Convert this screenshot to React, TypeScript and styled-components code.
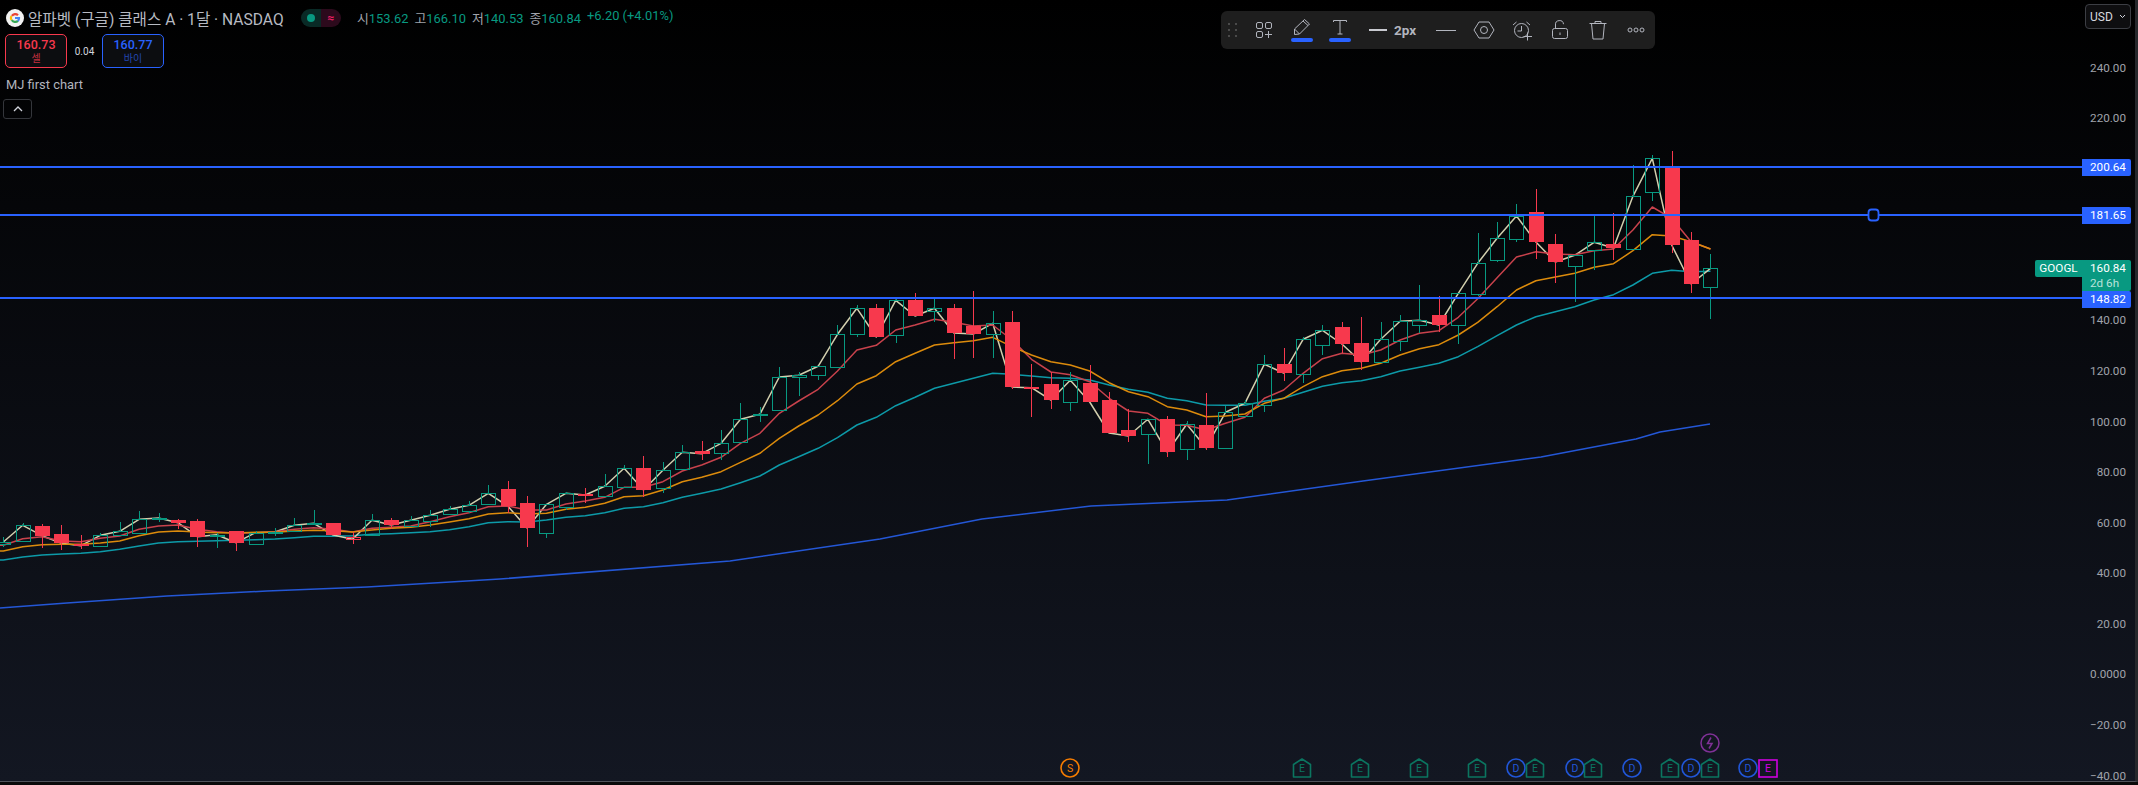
import React from 'react'
import styled, { createGlobalStyle } from 'styled-components'

const UI_FONT = `Roboto, 'Noto Sans CJK KR', sans-serif`
const UP = '#089981'
const DOWN = '#f7394d'
const BLUE = '#2962ff'

const GlobalStyle = createGlobalStyle`
  html, body {
    margin: 0;
    padding: 0;
    background: #0a0a0a;
    font-family: ${UI_FONT};
  }
`

const Page = styled.div`
  width: 2138px;
  height: 785px;
  overflow: hidden;
  background: #0a0a0a;
`

const Frame = styled.div`
  display: flex;
  height: 781px;
  background: linear-gradient(#000 0%, #131722 100%);
  border-right: 3px solid #26282c;
  border-bottom: 1px solid #50535b;
`

const Pane = styled.div`
  position: relative;
  flex: 1;
  overflow: hidden;
`

const PriceAxis = styled.div`
  position: relative;
  display: flex;
  flex-direction: column;
  width: 53px;
  height: 781px;
`

const CurrencyButton = styled.div`
  display: flex;
  align-items: center;
  justify-content: space-between;
  box-sizing: border-box;
  flex: none;
  width: 46px;
  height: 25px;
  margin: 4px 0 13.4px 3px;
  padding: 0 4px;
  background: #0e0e10;
  border: 1px solid #3c3e44;
  border-radius: 4px;
  color: #d6d8de;
  font-size: 12px;
`

const AxisLabel = styled.div`
  display: flex;
  align-items: center;
  justify-content: flex-end;
  flex: none;
  height: 50.57px;
  padding-right: 9px;
  color: #a0a3ab;
  font-size: 11.7px;
  line-height: 12px;
`

const PriceTag = styled.div<{ $top: number; $bg: string; $height: number }>`
  position: absolute;
  left: 0;
  top: ${(p) => p.$top}px;
  box-sizing: border-box;
  width: 49px;
  height: ${(p) => p.$height}px;
  padding-left: 8px;
  background: ${(p) => p.$bg};
  border-radius: 0 2px 2px 0;
  color: #fff;
  font-size: 11.7px;
  line-height: 16px;
`

const TagSub = styled.div`
  color: #b9e3da;
  line-height: 14px;
`

const SymbolTag = styled.div`
  position: absolute;
  right: 0;
  top: 260px;
  box-sizing: border-box;
  width: 47px;
  height: 17px;
  background: ${UP};
  border-radius: 2px 0 0 2px;
  color: #fff;
  font-size: 11.7px;
  line-height: 17px;
  text-align: center;
`

const Legend = styled.div`
  position: absolute;
  left: 0;
  top: 0;
  display: flex;
  flex-direction: column;
  align-items: flex-start;
  padding-top: 8px;
`

const SymbolRow = styled.div`
  display: flex;
  align-items: center;
  height: 19px;
  padding-left: 6px;
  margin-bottom: 7px;
`

const SymbolName = styled.span`
  box-sizing: border-box;
  width: 258px;
  margin-left: 4px;
  color: #b7bac2;
  font-size: 15.6px;
  white-space: nowrap;
`

const StatusPill = styled.div`
  display: flex;
  width: 40px;
  height: 18px;
  margin-left: 15px;
  border-radius: 9px;
  overflow: hidden;
`

const StatusHalf = styled.div<{ $bg: string; $color: string }>`
  display: flex;
  align-items: center;
  justify-content: center;
  flex: 1;
  background: ${(p) => p.$bg};
  color: ${(p) => p.$color};
  font-size: 12px;
  font-weight: 700;
`

const StatusDot = styled.div`
  width: 8px;
  height: 8px;
  border-radius: 50%;
  background: ${UP};
`

const Ohlc = styled.div`
  display: flex;
  gap: 6px;
  margin-left: 16px;
  font-size: 12.9px;
  white-space: nowrap;
`

const OhlcLabel = styled.span`
  color: #a0a3ab;
`

const OhlcValue = styled.span`
  color: ${UP};
`

const TradeRow = styled.div`
  display: flex;
  align-items: center;
  height: 34px;
  padding-left: 5px;
`

const TradeButton = styled.div<{ $color: string; $sub: string }>`
  display: flex;
  flex-direction: column;
  align-items: center;
  box-sizing: border-box;
  width: 62px;
  height: 34px;
  padding-top: 2px;
  background: #0c0d10;
  border: 1px solid ${(p) => p.$color};
  border-radius: 5px;
  color: ${(p) => p.$color};
  font-size: 12.5px;
  font-weight: 500;
  line-height: 16px;

  small {
    color: ${(p) => p.$sub};
    font-size: 10px;
    font-weight: 400;
    line-height: 12px;
  }
`

const Spread = styled.div`
  width: 35px;
  color: #d1d4dc;
  font-size: 10px;
  text-align: center;
`

const StudyTitle = styled.div`
  height: 18px;
  margin: 8px 0 5px 6px;
  color: #b2b5be;
  font-size: 12.9px;
  line-height: 18px;
`

const CollapseButton = styled.div`
  display: flex;
  align-items: center;
  justify-content: center;
  box-sizing: border-box;
  width: 29px;
  height: 20px;
  margin-left: 3px;
  border: 1px solid #34363b;
  border-radius: 3px;
`

const Toolbar = styled.div`
  position: absolute;
  left: 1221px;
  top: 11px;
  display: flex;
  align-items: center;
  width: 434px;
  height: 38px;
  background: #1e1e1e;
  border-radius: 6px;
  color: #b2b5be;
`

const Grip = styled.div`
  display: flex;
  align-items: center;
  justify-content: center;
  width: 24px;
`

const ToolButton = styled.div`
  display: flex;
  flex-direction: column;
  align-items: center;
  justify-content: center;
  gap: 3px;
  flex: none;
  width: 38px;
  height: 38px;
`

const ColorBar = styled.div`
  width: 22px;
  height: 4px;
  background: ${BLUE};
  border-radius: 2px;
`

const WidthButton = styled.div`
  display: flex;
  align-items: center;
  flex: none;
  gap: 7px;
  box-sizing: border-box;
  width: 68px;
  padding-left: 10px;
  color: #b2b5be;
  font-size: 13.5px;
  font-weight: 700;
`

const WidthSample = styled.div`
  width: 18px;
  height: 2px;
  background: #c8cad0;
`

const ThinSample = styled.div`
  width: 20px;
  height: 1px;
  background: #b2b5be;
`

const Pin = styled.div<{ $x: number; $y: number }>`
  position: absolute;
  left: ${(p) => p.$x - 10}px;
  top: ${(p) => p.$y}px;
  display: grid;
  place-items: center;
  width: 20px;
  height: 20px;

  & > * {
    grid-area: 1 / 1;
  }
`

const PinLetter = styled.span<{ $color: string }>`
  color: ${(p) => p.$color};
  font-size: 10.5px;
`

// y values were read off in groups, each group has its own base
type Row = [number, number, number, number, string]
const group = (base: number, rows: Row[]) =>
  rows.map(([top, bot, hi, lo, kind]) => ({
    top: base + top / 3,
    bot: base + bot / 3,
    hi: base + hi / 3,
    lo: base + lo / 3,
    kind
  }))

const candles = [
  ...group(470, [
    [216, 222, 202, 232, 'g'], [166, 214, 160, 214, 'g'], [168, 197, 162, 233, 'r'], [192, 220, 166, 240, 'r'],
    [222, 227, 196, 236, 'r'], [196, 229, 190, 229, 'g'], [184, 194, 156, 194, 'g'], [148, 190, 124, 190, 'g'],
    [144, 146, 128, 156, 'g'], [150, 158, 148, 176, 'r'], [153, 200, 148, 230, 'r'], [194, 199, 188, 233, 'g'],
    [183, 218, 183, 242, 'r'], [188, 223, 184, 223, 'g'], [186, 188, 174, 197, 'g'], [166, 184, 144, 184, 'g'],
    [160, 163, 120, 165, 'g'], [159, 195, 159, 195, 'r'], [202, 208, 186, 222, 'o'], [151, 195, 132, 195, 'g'],
    [150, 165, 144, 178, 'r'], [151, 167, 138, 167, 'g'], [136, 152, 120, 170, 'g'], [118, 133, 108, 133, 'g'],
    [106, 122, 94, 130, 'g']
  ]),
  ...group(400, [
    [280, 313, 255, 313, 'g'], [267, 318, 243, 340, 'r'], [309, 384, 288, 440, 'r'], [313, 398, 313, 413, 'g'],
    [280, 322, 276, 330, 'g'], [282, 285, 264, 308, 'r'], [259, 287, 222, 287, 'g'], [205, 260, 195, 265, 'g'],
    [204, 270, 168, 290, 'r'], [211, 263, 186, 278, 'g'], [157, 208, 135, 208, 'g'], [153, 161, 124, 180, 'r'],
    [130, 158, 90, 180, 'g'], [58, 125, 10, 125, 'g'], [43, 46, 22, 65, 'g'], [-69, 31, -99, 31, 'g']
  ]),
  ...group(270, [
    [316, 320, 306, 378, 'g'], [289, 314, 289, 330, 'g'], [193, 290, 165, 290, 'g'], [115, 191, 105, 200, 'g'],
    [114, 201, 102, 201, 'r'], [91, 194, 85, 218, 'g'], [90, 138, 68, 138, 'r'], [115, 122, 82, 155, 'g'],
    [114, 189, 102, 266, 'r'], [168, 192, 63, 263, 'r'], [160, 191, 123, 263, 'g'], [156, 351, 123, 357, 'r'],
    [351, 353, 282, 440, 'r'], [342, 390, 306, 417, 'r'], [331, 395, 306, 423, 'g'], [339, 396, 285, 396, 'r'],
    [390, 489, 366, 489, 'r'], [480, 498, 417, 516, 'r'], [448, 491, 448, 582, 'g'], [447, 546, 438, 561, 'r'],
    [463, 536, 453, 570, 'g'], [465, 533, 369, 540, 'r']
  ]),
  ...group(300, [
    [337, 443, 317, 443, 'g'], [310, 347, 300, 347, 'g'], [193, 314, 166, 335, 'g'], [192, 219, 144, 243, 'r'],
    [118, 221, 110, 249, 'g'], [91, 134, 76, 165, 'g'], [81, 132, 66, 160, 'r'], [129, 186, 51, 209, 'r'],
    [118, 185, 66, 185, 'g'], [64, 124, 45, 152, 'g']
  ]),
  ...group(130, [
    [571, 584, 465, 610, 'g'], [556, 585, 498, 605, 'r'], [490, 584, 490, 642, 'g'], [400, 491, 309, 497, 'g'],
    [325, 389, 276, 396, 'g'], [258, 326, 222, 335, 'g'], [246, 336, 177, 387, 'r'], [342, 396, 312, 459, 'r'],
    [376, 407, 376, 516, 'g'], [337, 361, 258, 420, 'g'], [342, 354, 249, 390, 'r'], [199, 356, 105, 356, 'g'],
    [85, 187, 75, 212, 'g'], [111, 345, 63, 370, 'r'], [330, 462, 306, 489, 'r'], [415, 470, 372, 567, 'g']
  ])
]

const xAt = (i: number) => 3.3 + 19.4 * i

const series = (groups: [number, number[]][]) => {
  const ys = groups.flatMap(([base, vals]) => vals.map((v) => base + v / 3))
  const pts = ys.map((y, i) => `${xAt(i).toFixed(1)},${y.toFixed(1)}`)
  return `0,${ys[0].toFixed(1)} ${pts.join(' ')}`
}

const redLine = series([
  [470, [226, 206, 200, 213, 215, 205, 198, 178, 168, 165, 178, 185, 190, 188, 185, 178, 173, 178, 186, 175, 172, 168, 155, 140, 128]],
  [400, [320, 318, 330, 330, 312, 303, 292, 262, 262, 245, 213, 195, 172, 130, 100, 40]],
  [270, [393, 358, 303, 240, 226, 180, 165, 148, 157, 168, 165, 210, 268, 306, 314, 335, 385, 423, 430, 465, 466, 480]],
  [300, [370, 352, 295, 270, 220, 176, 160, 165, 150, 120]],
  [130, [610, 602, 562, 506, 443, 381, 365, 372, 374, 362, 357, 300, 231, 265, 335, 357]]
])

const orangeLine = series([
  [470, [243, 230, 224, 223, 223, 219, 213, 197, 186, 183, 186, 188, 189, 187, 187, 183, 181, 182, 186, 180, 175, 172, 165, 156, 146]],
  [400, [342, 338, 342, 340, 328, 322, 310, 290, 287, 270, 245, 232, 215, 187, 160, 115]],
  [270, [468, 435, 392, 342, 317, 275, 250, 225, 218, 212, 202, 230, 255, 275, 285, 303, 338, 365, 380, 410, 420, 440]],
  [300, [348, 342, 310, 295, 260, 230, 212, 205, 190, 165]],
  [130, [656, 644, 615, 577, 530, 480, 452, 441, 430, 412, 401, 362, 314, 318, 335, 357]]
])

const tealLine = series([
  [470, [270, 261, 255, 252, 250, 245, 238, 228, 219, 215, 214, 212, 211, 209, 207, 203, 199, 199, 197, 193, 191, 188, 185, 179, 170]],
  [400, [368, 365, 366, 360, 352, 347, 338, 325, 320, 308, 292, 280, 267, 248, 228, 195]],
  [270, [560, 535, 503, 465, 442, 407, 382, 355, 340, 325, 310, 313, 318, 323, 325, 330, 345, 358, 367, 385, 392, 405]],
  [300, [316, 316, 304, 295, 277, 259, 248, 242, 230, 213]],
  [130, [712, 700, 680, 650, 617, 585, 560, 545, 530, 510, 494, 465, 430, 421, 425, 424]]
])

const longLine =
  '0,608 67,603 167,596 267,591 367,587 500,579 730,561 880,539 982,519 1091,506 1227,500 1363,481 1541,457 1636,439 1660,432 1710,424'

const closeLine = candles
  .map((c, i) => `${xAt(i).toFixed(1)},${(c.kind === 'g' ? c.top : c.bot).toFixed(1)}`)
  .join(' ')

const Candle = ({ c, i }: { c: (typeof candles)[number]; i: number }) => {
  const x = Math.round(xAt(i)) + 0.5
  const color = c.kind === 'g' ? UP : DOWN
  const top = Math.round(c.top)
  const bot = Math.round(c.bot)
  if (c.kind === 'r') {
    return (
      <g shapeRendering="crispEdges">
        <line x1={x} x2={x} y1={c.hi} y2={c.lo} stroke={color} />
        <rect x={x - 7.5} y={top} width={15} height={Math.max(bot - top, 2)} fill={color} />
      </g>
    )
  }
  return (
    <g shapeRendering="crispEdges">
      <line x1={x} x2={x} y1={c.hi} y2={top} stroke={color} />
      <line x1={x} x2={x} y1={bot} y2={c.lo} stroke={color} />
      <rect x={x - 7} y={top + 0.5} width={14} height={Math.max(bot - top, 1)} fill="none" stroke={color} />
    </g>
  )
}

const Chart = () => (
  <svg width="2082" height="781" style={{ display: 'block' }}>
    <g fill="none" strokeWidth="1.5" strokeLinejoin="round">
      <polyline points={longLine} stroke="#2457d6" />
      <polyline points={tealLine} stroke="#0d9aa8" />
      <polyline points={closeLine} stroke="#d2cfae" />
      <polyline points={redLine} stroke="#c8424c" />
      <polyline points={orangeLine} stroke="#dc8b0c" />
    </g>
    {candles.map((c, i) => (
      <Candle key={i} c={c} i={i} />
    ))}
    <g stroke={BLUE} strokeWidth="2">
      <line x1="0" x2="2082" y1="167" y2="167" />
      <line x1="0" x2="2082" y1="215" y2="215" />
      <line x1="0" x2="2082" y1="298" y2="298" />
    </g>
    <rect x="1868.5" y="209.5" width="10" height="11" rx="3" fill="#06070b" stroke={BLUE} strokeWidth="1.8" />
  </svg>
)

const GoogleLogo = () => (
  <svg width="18" height="18" viewBox="0 0 18 18">
    <circle cx="9" cy="9" r="9" fill="#f2f2f2" />
    <g fill="none" strokeWidth="2.2">
      <path d="M5.9 6.9 A4.1 4.1 0 0 1 12 6.2" stroke="#ea4335" />
      <path d="M5.4 11 A4.1 4.1 0 0 1 5.4 7" stroke="#fbbc05" />
      <path d="M12 11.9 A4.1 4.1 0 0 1 5.8 11" stroke="#34a853" />
      <path d="M9 9 H13 A4.1 4.1 0 0 1 11.8 12" stroke="#4285f4" />
    </g>
  </svg>
)

const GripIcon = () => (
  <svg width="10" height="14" viewBox="0 0 10 14" fill="#4a4a4a">
    {[1, 7, 13].map((y) => (
      <g key={y}>
        <rect x="0" y={y - 1} width="2" height="2" />
        <rect x="7" y={y - 1} width="2" height="2" />
      </g>
    ))}
  </svg>
)

const Icon = ({ w = 22, h = 22, children }: { w?: number; h?: number; children: React.ReactNode }) => (
  <svg width={w} height={h} viewBox={`0 0 ${w} ${h}`} fill="none" stroke="currentColor" strokeWidth="1">
    {children}
  </svg>
)

const Toolstrip = () => (
  <Toolbar>
    <Grip>
      <GripIcon />
    </Grip>
    <ToolButton>
      <Icon>
        <rect x="3.5" y="3.5" width="6" height="6" rx="1.5" />
        <rect x="12.5" y="3.5" width="6" height="6" rx="1.5" />
        <rect x="3.5" y="12.5" width="6" height="6" rx="1.5" />
        <path d="M15.5 12v7M12 15.5h7" />
      </Icon>
    </ToolButton>
    <ToolButton>
      <Icon w={18} h={16}>
        <path d="M1.5 10 L11.5 0.5 L16.5 5 L6.5 15 L1.5 15.5 Z M10 2 L15 6.5 M1.5 10 L6.5 15" />
      </Icon>
      <ColorBar />
    </ToolButton>
    <ToolButton>
      <Icon w={18} h={16}>
        <path d="M2.5 3V1.5h13V3M9 1.5V15M6.5 15h5" />
      </Icon>
      <ColorBar />
    </ToolButton>
    <WidthButton>
      <WidthSample />
      <span>2px</span>
    </WidthButton>
    <ToolButton>
      <ThinSample />
    </ToolButton>
    <ToolButton>
      <Icon>
        <path d="M6 3h10L21 11l-5 8H6L1 11z" />
        <circle cx="11" cy="11" r="3.5" />
      </Icon>
    </ToolButton>
    <ToolButton>
      <Icon>
        <circle cx="10.5" cy="11.5" r="7" />
        <path d="M10.5 7v5H6.5M2 6l3.5-3M19 6l-3.5-3M16.5 13.5v8M12.5 17.5h8.5" />
      </Icon>
    </ToolButton>
    <ToolButton>
      <Icon>
        <rect x="3.5" y="9.5" width="15" height="10" rx="2" />
        <path d="M6.5 9.5V6a4 4 0 0 1 8 -.8M11 13.5v2.5" />
      </Icon>
    </ToolButton>
    <ToolButton>
      <Icon>
        <path d="M2.5 4.5h17M8 4.5V2.5h6v2M4.5 4.5l1.5 15.5h10l1.5-15.5" />
      </Icon>
    </ToolButton>
    <ToolButton>
      <Icon>
        <circle cx="5" cy="11" r="2" />
        <circle cx="11" cy="11" r="2" />
        <circle cx="17" cy="11" r="2" />
      </Icon>
    </ToolButton>
  </Toolbar>
)

const PIN_COLORS: Record<string, string> = {
  E: '#0b7560',
  D: '#2156d8',
  S: '#f57c00',
  X: '#d000e0'
}

const pins: [string, number][] = [
  ['S', 1070], ['E', 1302], ['E', 1360], ['E', 1419], ['E', 1477], ['D', 1516], ['E', 1535], ['D', 1575],
  ['E', 1593], ['D', 1632], ['E', 1670], ['D', 1691], ['E', 1710], ['D', 1748], ['X', 1768]
]

const EventPin = ({ kind, x }: { kind: string; x: number }) => {
  const color = PIN_COLORS[kind]
  return (
    <Pin $x={x} $y={758}>
      <svg width="20" height="20" viewBox="0 0 20 20" fill="none" stroke={color} strokeWidth="1.6">
        {kind === 'E' && <path d="M1.5 6.5 L10 1 L18.5 6.5 V19 H1.5 Z" strokeLinejoin="round" />}
        {kind === 'X' && <rect x="1" y="2" width="18" height="17" />}
        {(kind === 'D' || kind === 'S') && <circle cx="10" cy="10" r="9" />}
      </svg>
      <PinLetter $color={color}>{kind === 'X' ? 'E' : kind}</PinLetter>
    </Pin>
  )
}

// 200, 180 and 160 sit under the price tags, so those cells stay empty
const axisPrices = [
  '240.00', '220.00', '', '', '', '140.00', '120.00', '100.00',
  '80.00', '60.00', '40.00', '20.00', '0.0000', '−20.00', '−40.00'
]

const App: React.FC = () => (
  <Page>
    <GlobalStyle />
    <Frame>
      <Pane>
        <Chart />
        <Legend>
          <SymbolRow>
            <GoogleLogo />
            <SymbolName>알파벳 (구글) 클래스 A · 1달 · NASDAQ</SymbolName>
            <StatusPill>
              <StatusHalf $bg="#092a26" $color={UP}>
                <StatusDot />
              </StatusHalf>
              <StatusHalf $bg="#2c0a1c" $color="#e91e63">≈</StatusHalf>
            </StatusPill>
            <Ohlc>
              <span><OhlcLabel>시</OhlcLabel><OhlcValue>153.62</OhlcValue></span>
              <span><OhlcLabel>고</OhlcLabel><OhlcValue>166.10</OhlcValue></span>
              <span><OhlcLabel>저</OhlcLabel><OhlcValue>140.53</OhlcValue></span>
              <span><OhlcLabel>종</OhlcLabel><OhlcValue>160.84</OhlcValue></span>
              <OhlcValue>+6.20 (+4.01%)</OhlcValue>
            </Ohlc>
          </SymbolRow>
          <TradeRow>
            <TradeButton $color={DOWN} $sub="#c22f3f">
              160.73
              <small>셀</small>
            </TradeButton>
            <Spread>0.04</Spread>
            <TradeButton $color={BLUE} $sub="#2347b0">
              160.77
              <small>바이</small>
            </TradeButton>
          </TradeRow>
          <StudyTitle>MJ first chart</StudyTitle>
          <CollapseButton>
            <svg width="10" height="6" viewBox="0 0 10 6" fill="none" stroke="#d1d4dc" strokeWidth="1.3">
              <path d="M1 5 L5 1 L9 5" />
            </svg>
          </CollapseButton>
        </Legend>
        <Toolstrip />
        <SymbolTag>GOOGL</SymbolTag>
        {pins.map(([kind, x]) => (
          <EventPin key={`${kind}${x}`} kind={kind} x={x} />
        ))}
        <Pin $x={1710} $y={733}>
          <svg width="20" height="20" viewBox="0 0 20 20" fill="none" stroke="#7f3196" strokeWidth="1.5">
            <circle cx="10" cy="10" r="9" />
            <path d="M11 4.5 L7.5 10.5 H12 L9 15.5" />
          </svg>
        </Pin>
      </Pane>
      <PriceAxis>
        <CurrencyButton>
          USD
          <svg width="7" height="5" viewBox="0 0 7 5" fill="none" stroke="#d1d4dc">
            <path d="M1 1 L3.5 3.5 L6 1" />
          </svg>
        </CurrencyButton>
        {axisPrices.map((price, i) => (
          <AxisLabel key={i}>{price}</AxisLabel>
        ))}
        <PriceTag $top={159} $height={17} $bg={BLUE}>200.64</PriceTag>
        <PriceTag $top={207} $height={17} $bg={BLUE}>181.65</PriceTag>
        <PriceTag $top={260} $height={31} $bg={UP}>
          160.84
          <TagSub>2d 6h</TagSub>
        </PriceTag>
        <PriceTag $top={291} $height={17} $bg={BLUE}>148.82</PriceTag>
      </PriceAxis>
    </Frame>
  </Page>
)

export default App
